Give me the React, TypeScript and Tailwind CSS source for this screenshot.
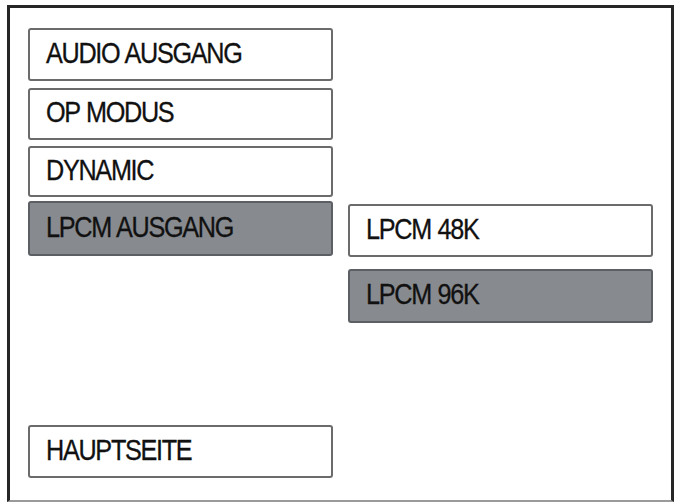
import React from "react";

type Item = { label: string; active?: boolean; cls: string };

const leftItems: Item[] = [
  { label: "AUDIO AUSGANG", cls: "h-[53px]" },
  { label: "OP MODUS", cls: "mt-[7px] h-[52px]" },
  { label: "DYNAMIC", cls: "mt-[6px] h-[51px]" },
  { label: "LPCM AUSGANG", active: true, cls: "mt-[4px] h-[55px]" },
];

const subItems: Item[] = [
  { label: "LPCM 48K", cls: "h-[53px]" },
  { label: "LPCM 96K", active: true, cls: "mt-[12px] h-[54px]" },
];

function MenuButton({ item }: { item: Item }) {
  return (
    <div
      className={`${item.cls} w-[305px] flex items-center pl-[16px] pb-[3px] border-2 rounded-[3px] overflow-hidden ${
        item.active ? "bg-[#878a8f] border-[#5c5f63]" : "bg-white border-[#6b6b6b]"
      }`}
    >
      <span className="inline-block origin-left scale-x-[0.87] whitespace-nowrap text-[29px] leading-none tracking-[-1.5px] [word-spacing:1px] text-[#111] [-webkit-text-stroke:0.3px_#111] font-['Liberation_Sans',Arial,sans-serif]">
        {item.label}
      </span>
    </div>
  );
}

export default function App() {
  return (
    <div className="w-[676px] h-[503px] bg-white pt-[5px] pl-[7px]">
      <div className="w-[667px] h-[497px] border-[3px] border-[#262626] border-b-[#9a9a9a] border-b-2 flex pl-[18px] pt-[20px]">
        <div className="flex flex-col">
          {leftItems.map((it) => (
            <MenuButton key={it.label} item={it} />
          ))}
          <div className="mt-[169px]">
            <MenuButton item={{ label: "HAUPTSEITE", cls: "h-[53px]" }} />
          </div>
        </div>
        <div className="flex flex-col ml-[15px] pt-[176px]">
          {subItems.map((it) => (
            <MenuButton key={it.label} item={it} />
          ))}
        </div>
      </div>
    </div>
  );
}
